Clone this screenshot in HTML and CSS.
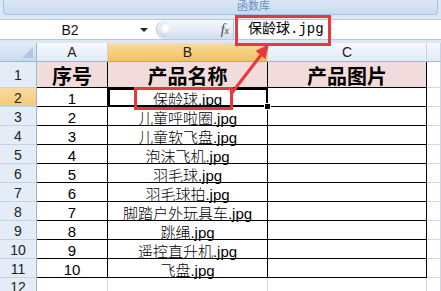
FILE: index.html
```html
<!DOCTYPE html>
<html lang="zh-CN">
<head>
  <meta charset="UTF-8">
  <meta name="viewport" content="width=device-width, initial-scale=1.0">
  <title>产品图片</title>
  <link rel="stylesheet" href="styles.css">
</head>
<body>

<div id="window">
  <div class="ribbon">
    <div class="ribbon-group">函数库</div>
  </div>

  <div class="formula-bar">
    <div class="name-box">
      <span class="name">B2</span>
      <span class="caret"></span>
    </div>
    <div class="splitter">
      <span class="knob"></span>
      <span class="fx">f<small>x</small></span>
    </div>
    <div class="formula">保龄球.jpg</div>
  </div>

  <div class="sheet">
    <div class="corner"></div>
    <div class="col-head">A</div>
    <div class="col-head active">B</div>
    <div class="col-head">C</div>
    <div class="col-head"></div>

    <div class="row-head">1</div>
    <div class="cell title">序号</div>
    <div class="cell title">产品名称</div>
    <div class="cell title">产品图片</div>
    <div class="cell blank"></div>

    <div class="row-head active">2</div>
    <div class="cell">1</div>
    <div class="cell selected">保龄球.jpg<span class="handle"></span></div>
    <div class="cell"></div>
    <div class="cell blank"></div>

    <div class="row-head">3</div>
    <div class="cell">2</div>
    <div class="cell">儿童呼啦圈.jpg</div>
    <div class="cell"></div>
    <div class="cell blank"></div>

    <div class="row-head">4</div>
    <div class="cell">3</div>
    <div class="cell">儿童软飞盘.jpg</div>
    <div class="cell"></div>
    <div class="cell blank"></div>

    <div class="row-head">5</div>
    <div class="cell">4</div>
    <div class="cell">泡沫飞机.jpg</div>
    <div class="cell"></div>
    <div class="cell blank"></div>

    <div class="row-head">6</div>
    <div class="cell">5</div>
    <div class="cell">羽毛球.jpg</div>
    <div class="cell"></div>
    <div class="cell blank"></div>

    <div class="row-head">7</div>
    <div class="cell">6</div>
    <div class="cell">羽毛球拍.jpg</div>
    <div class="cell"></div>
    <div class="cell blank"></div>

    <div class="row-head">8</div>
    <div class="cell">7</div>
    <div class="cell">脚踏户外玩具车.jpg</div>
    <div class="cell"></div>
    <div class="cell blank"></div>

    <div class="row-head">9</div>
    <div class="cell">8</div>
    <div class="cell">跳绳.jpg</div>
    <div class="cell"></div>
    <div class="cell blank"></div>

    <div class="row-head">10</div>
    <div class="cell">9</div>
    <div class="cell">遥控直升机.jpg</div>
    <div class="cell"></div>
    <div class="cell blank"></div>

    <div class="row-head">11</div>
    <div class="cell">10</div>
    <div class="cell">飞盘.jpg</div>
    <div class="cell"></div>
    <div class="cell blank"></div>

    <div class="row-head">12</div>
    <div class="cell blank"></div>
    <div class="cell blank"></div>
    <div class="cell blank"></div>
    <div class="cell blank"></div>
  </div>

  <!-- red marks drawn over the screenshot -->
  <svg class="callout" width="441" height="291" viewBox="0 0 441 291">
    <rect x="236.5" y="16.5" width="93" height="28" fill="none" stroke="#e8383d" stroke-width="3"/>
    <rect x="135.5" y="88.5" width="96" height="20" fill="none" stroke="#e8383d" stroke-width="3"/>
    <line x1="231" y1="94" x2="261" y2="55" stroke="#e8383d" stroke-width="3"/>
    <polygon points="269,44 255.5,51 265.5,59" fill="#e8383d"/>
  </svg>
</div>

</body>
</html>
```

FILE: styles.css
```css
body {
  margin: 0;
  font-family: "Liberation Sans", "Noto Sans CJK SC", sans-serif;
  overflow: hidden;
}

#window {
  position: relative;
  width: 441px;
  height: 291px;
  background: #dde8f5;
  overflow: hidden;
}

.ribbon {
  height: 19px;
  padding: 0 3px;
  box-sizing: border-box;
}

.ribbon-group {
  height: 15px;
  box-sizing: border-box;
  padding-left: 233px;
  background: linear-gradient(#dbe7f6, #c9daf0);
  border: 1px solid #a9c1e0;
  border-top: none;
  border-radius: 0 0 4px 4px;
  font-size: 11px;
  line-height: 13px;
  color: #6c8fc2;
}

.formula-bar {
  display: flex;
  height: 21px;
  margin-bottom: 3px;
  background: #fff;
  border-top: 1px solid #b3c7e1;
  border-bottom: 1px solid #b3c7e1;
  box-sizing: border-box;
}

.name-box {
  display: flex;
  align-items: center;
  width: 156px;
  font-size: 14px;
  color: #111;
}

.name {
  width: 140px;
  text-align: center;
}

.caret {
  width: 0;
  height: 0;
  border-left: 4px solid transparent;
  border-right: 4px solid transparent;
  border-top: 4px solid #222;
}

.splitter {
  display: flex;
  align-items: center;
  justify-content: space-between;
  width: 77px;
  padding: 0 4px 0 2px;
  box-sizing: border-box;
  background: linear-gradient(#f7f9fd, #d2dff0);
  border-radius: 10px 0 0 10px;
  border-left: 1px solid #aec3de;
}

.knob {
  width: 11px;
  height: 15px;
  border-radius: 50%;
  background: radial-gradient(circle at 60% 40%, #fff 20%, #b9c7d8 90%);
}

.fx {
  font-family: "Liberation Serif", serif;
  font-style: italic;
  font-size: 14px;
  color: #444;
}

.fx small {
  font-size: 10px;
}

.formula {
  flex: 1;
  padding-left: 14px;
  border-left: 1px solid #b3c7e1;
  font-family: "Liberation Mono", "Noto Sans CJK SC", monospace;
  font-size: 14px;
  line-height: 19px;
  color: #000;
}

.sheet {
  display: grid;
  grid-template-columns: 37px 71px 160px 159px 1fr;
  grid-template-rows: 19px 26px repeat(10, 19px) 1fr;
  height: 248px;
  background: #fff;
}

.corner {
  position: relative;
  background: linear-gradient(#e3ecf8, #c9d9ee);
  border-right: 1px solid #9eb6ce;
  border-bottom: 1px solid #9eb6ce;
}

.corner::after {
  content: "";
  position: absolute;
  right: 3px;
  bottom: 3px;
  border-left: 11px solid transparent;
  border-bottom: 11px solid #b2c6e0;
}

.col-head {
  display: flex;
  align-items: center;
  justify-content: center;
  background: linear-gradient(#f7f9fd, #e2eaf6);
  border-right: 1px solid #c5d3e5;
  border-bottom: 1px solid #9eb6ce;
  font-size: 14px;
  color: #222;
}

.col-head.active {
  background: linear-gradient(#f9dca2, #f1c15f);
  border-bottom-color: #f29536;
}

.row-head {
  display: flex;
  align-items: center;
  justify-content: center;
  padding-top: 1px;
  background: #e4ecf7;
  border-right: 1px solid #9eb6ce;
  border-bottom: 1px solid #c5d3e5;
  font-size: 14px;
  color: #222;
}

.row-head.active {
  background: linear-gradient(#f9dba0, #f4c978);
}

.cell {
  position: relative;
  display: flex;
  align-items: center;
  justify-content: center;
  padding-top: 2px;
  border-right: 1px solid #000;
  border-bottom: 1px solid #000;
  font-size: 15px;
  font-weight: 300;
  color: #000;
  white-space: nowrap;
}

.cell.title {
  padding-top: 1px;
  background: #f2dcdb;
  font-size: 20px;
  font-weight: bold;
}

.cell.blank {
  border-right-color: #d0d7e5;
  border-bottom-color: #d0d7e5;
}

.cell.selected {
  outline: 2px solid #000;
  outline-offset: -2px;
  box-shadow: inset 0 0 0 3px #fff;
}

.handle {
  position: absolute;
  right: -4px;
  bottom: -4px;
  width: 5px;
  height: 5px;
  background: #000;
  border: 1px solid #fff;
  z-index: 2;
}

.callout {
  position: absolute;
  left: 0;
  top: 0;
  pointer-events: none;
}
```
